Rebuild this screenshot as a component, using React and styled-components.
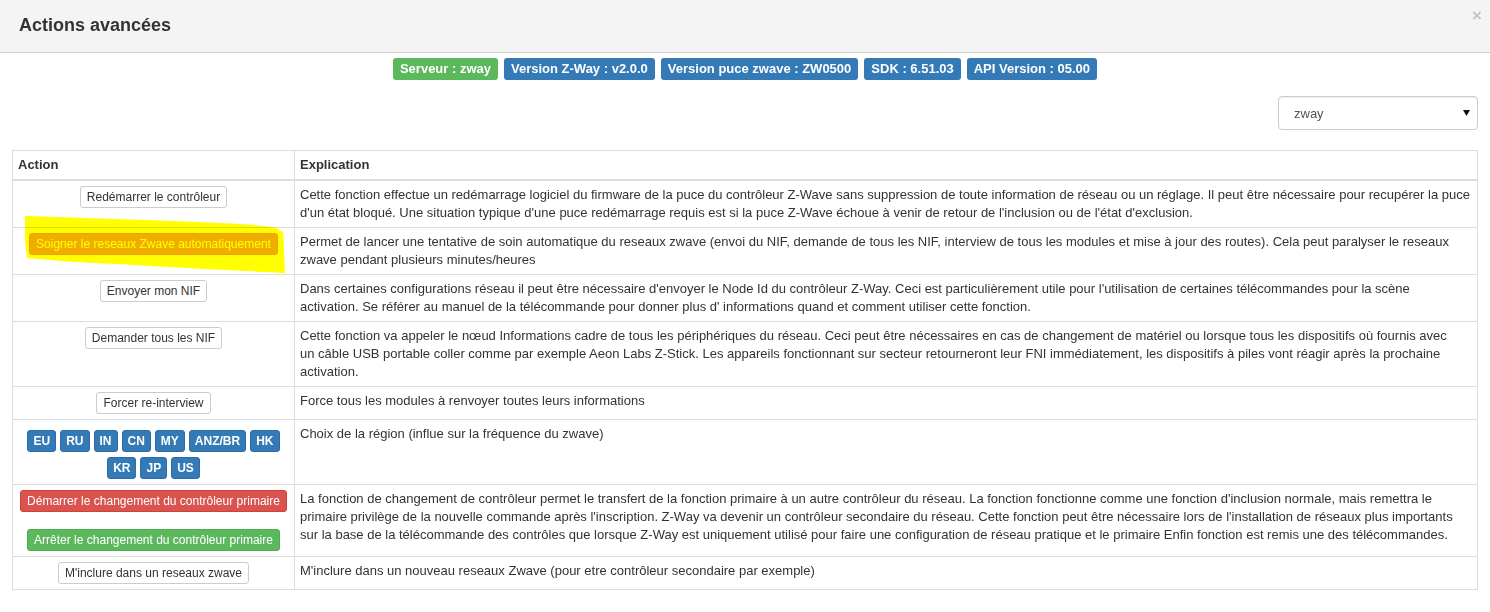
import React from 'react';
import styled, { createGlobalStyle, css } from 'styled-components';

// couleurs bootstrap
const colors = {
    text: '#333',
    border: '#ddd',
    primary: '#337ab7',
    primaryBorder: '#2e6da4',
    success: '#5cb85c',
    successBorder: '#4cae4c',
    danger: '#d9534f',
    dangerBorder: '#d43f3a',
    warning: '#f0ad4e',
    warningBorder: '#eea236',
};

const infos = [
    { label: 'Serveur : zway', tone: 'success' },
    { label: 'Version Z-Way : v2.0.0', tone: 'primary' },
    { label: 'Version puce zwave : ZW0500', tone: 'primary' },
    { label: 'SDK : 6.51.03', tone: 'primary' },
    { label: 'API Version : 05.00', tone: 'primary' },
];

const regions = ['EU', 'RU', 'IN', 'CN', 'MY', 'ANZ/BR', 'HK', 'KR', 'JP', 'US'];

const rows = [
    {
        buttons: [{ text: 'Redémarrer le contrôleur' }],
        text: "Cette fonction effectue un redémarrage logiciel du firmware de la puce du contrôleur Z-Wave sans suppression de toute information de réseau ou un réglage. Il peut être nécessaire pour recupérer la puce d'un état bloqué. Une situation typique d'une puce redémarrage requis est si la puce Z-Wave échoue à venir de retour de l'inclusion ou de l'état d'exclusion.",
    },
    {
        buttons: [{ text: 'Soigner le reseaux Zwave automatiquement', tone: 'warning' }],
        marked: true,
        text: 'Permet de lancer une tentative de soin automatique du reseaux zwave (envoi du NIF, demande de tous les NIF, interview de tous les modules et mise à jour des routes). Cela peut paralyser le reseaux zwave pendant plusieurs minutes/heures',
    },
    {
        buttons: [{ text: 'Envoyer mon NIF' }],
        text: "Dans certaines configurations réseau il peut être nécessaire d'envoyer le Node Id du contrôleur Z-Way. Ceci est particulièrement utile pour l'utilisation de certaines télécommandes pour la scène activation.\u00a0Se référer au manuel de la télécommande pour donner plus d' informations quand et comment utiliser cette fonction.",
    },
    {
        buttons: [{ text: 'Demander tous les NIF' }],
        text: 'Cette fonction va appeler le nœud Informations cadre de tous les périphériques du réseau. Ceci peut être nécessaires en cas de changement de matériel ou lorsque tous les dispositifs où fournis avec un\u00a0câble USB portable coller comme par exemple Aeon Labs Z-Stick. Les appareils fonctionnant sur secteur retourneront leur FNI immédiatement, les dispositifs à piles vont réagir après la prochaine activation.',
    },
    {
        buttons: [{ text: 'Forcer re-interview' }],
        text: 'Force tous les modules à renvoyer toutes leurs informations',
    },
    {
        regions: true,
        text: 'Choix de la région (influe sur la fréquence du zwave)',
    },
    {
        buttons: [
            { text: 'Démarrer le changement du contrôleur primaire', tone: 'danger' },
            { text: 'Arrêter le changement du contrôleur primaire', tone: 'success' },
        ],
        text: "La fonction de changement de contrôleur permet le transfert de la fonction primaire à un autre contrôleur du réseau. La fonction fonctionne comme une fonction d'inclusion normale, mais remettra le primaire privilège de la nouvelle commande après l'inscription. Z-Way va devenir un contrôleur secondaire du réseau. Cette fonction peut être nécessaire lors de l'installation de réseaux plus importants sur la base de la télécommande des contrôles que lorsque Z-Way est uniquement utilisé pour faire une configuration de réseau pratique et le primaire Enfin fonction est remis une des télécommandes.",
    },
    {
        buttons: [{ text: "M'inclure dans un reseaux zwave" }],
        text: "M'inclure dans un nouveau reseaux Zwave (pour etre contrôleur secondaire par exemple)",
    },
];

function App() {
    return (
        <>
            <GlobalStyle />
            <Modal>
                <Header>
                    <Title>Actions avancées</Title>
                    <Close>×</Close>
                </Header>

                <Body>
                    <InfoRow>
                        {infos.map((info) => (
                            <Label key={info.label} $tone={info.tone}>{info.label}</Label>
                        ))}
                    </InfoRow>

                    <SelectRow>
                        <SelectWrap>
                            <Select defaultValue="zway">
                                <option value="zway">zway</option>
                            </Select>
                            <Caret width="7" height="6" viewBox="0 0 7 6">
                                <path d="M0 0h7L3.5 6z" fill="#111" />
                            </Caret>
                        </SelectWrap>
                    </SelectRow>

                    <Table>
                        <thead>
                            <tr>
                                <Th $first>Action</Th>
                                <Th>Explication</Th>
                            </tr>
                        </thead>
                        <tbody>
                            {rows.map((row, i) => (
                                <tr key={i}>
                                    <ActionCell>
                                        {row.regions ? (
                                            <RegionList>
                                                {regions.map((r) => (
                                                    <Btn key={r} $tone="primary" $region>{r}</Btn>
                                                ))}
                                            </RegionList>
                                        ) : (
                                            <BtnStack>
                                                {row.buttons.map((b) => (
                                                    <Btn key={b.text} $tone={b.tone}>{b.text}</Btn>
                                                ))}
                                            </BtnStack>
                                        )}
                                        {row.marked && (
                                            <Highlight width="262" height="60" viewBox="0 0 262 60">
                                                <path
                                                    d="M1 1 C40 2 90 4 150 6 C200 8 235 9 252 13 L259 17 L261 58 C220 56 160 53 110 50 C70 48 30 46 3 43 L1 24 Z"
                                                    fill="#ffff00"
                                                />
                                            </Highlight>
                                        )}
                                    </ActionCell>
                                    <TextCell>{row.text}</TextCell>
                                </tr>
                            ))}
                        </tbody>
                    </Table>
                </Body>
            </Modal>
        </>
    );
}

const GlobalStyle = createGlobalStyle`
    body {
        margin: 0;
        background: #fff;
        font-family: "Liberation Sans", Arial, sans-serif;
        font-size: 13px;
        color: ${colors.text};
    }
`;

const Modal = styled.div`
    width: 1490px;
    background: #fff;
`;

const Header = styled.div`
    height: 53px;
    display: flex;
    justify-content: space-between;
    align-items: flex-start;
    padding: 0 8px 0 19px;
    box-sizing: border-box;
    background: #f4f4f4;
    border-bottom: 1px solid #cfcfcf;
`;

const Title = styled.h4`
    margin: 0;
    padding-top: 15px;
    font-size: 18px;
    line-height: 20px;
    font-weight: bold;
    color: ${colors.text};
`;

const Close = styled.span`
    margin-top: 6px;
    font-size: 17px;
    line-height: 20px;
    font-weight: bold;
    color: #000;
    opacity: 0.2;
`;

const Body = styled.div`
    padding: 5px 12px 20px 12px;
`;

const InfoRow = styled.div`
    display: flex;
    justify-content: center;
    gap: 6px;
`;

const tones = {
    primary: [colors.primary, colors.primaryBorder],
    success: [colors.success, colors.successBorder],
    danger: [colors.danger, colors.dangerBorder],
    warning: [colors.warning, colors.warningBorder],
};

const Label = styled.span`
    display: inline-block;
    padding: 4px 7px 5px;
    font-size: 13px;
    line-height: 13px;
    font-weight: bold;
    color: #fff;
    border-radius: 3px;
    background: ${(props) => tones[props.$tone][0]};
`;

const SelectRow = styled.div`
    display: flex;
    justify-content: flex-end;
    margin-top: 16px;
`;

const SelectWrap = styled.div`
    position: relative;
    width: 200px;
`;

const Select = styled.select`
    appearance: none;
    width: 100%;
    height: 34px;
    padding: 6px 12px 6px 15px;
    font-family: "Liberation Sans", Arial, sans-serif;
    font-size: 13px;
    color: #555;
    background: #fff;
    border: 1px solid #ccc;
    border-radius: 4px;
    box-shadow: inset 0 1px 1px rgba(0, 0, 0, 0.075);
`;

const Caret = styled.svg`
    position: absolute;
    right: 8px;
    top: 14px;
    pointer-events: none;
`;

const Table = styled.table`
    width: 100%;
    margin-top: 20px;
    border-collapse: collapse;
    border: 1px solid ${colors.border};
`;

const Th = styled.th`
    padding: 5px;
    text-align: left;
    font-weight: bold;
    line-height: 18px;
    border: 1px solid ${colors.border};
    border-bottom-width: 2px;
    ${(props) => props.$first && css`width: 271px;`}
`;

const ActionCell = styled.td`
    position: relative;
    padding: 5px;
    vertical-align: top;
    text-align: center;
    line-height: 18px;
    border: 1px solid ${colors.border};
`;

const TextCell = styled.td`
    padding: 5px;
    vertical-align: top;
    line-height: 18px;
    border: 1px solid ${colors.border};
`;

const BtnStack = styled.div`
    display: flex;
    flex-direction: column;
    align-items: center;
    gap: 17px;
`;

const RegionList = styled.div`
    display: flex;
    flex-wrap: wrap;
    justify-content: center;
    gap: 5px 4px;
    padding: 5px 8px 0;
`;

const Btn = styled.button`
    padding: ${(props) => (props.$region ? '1px 5px' : '1px 6px')};
    font-family: "Liberation Sans", Arial, sans-serif;
    font-size: 12px;
    line-height: 18px;
    font-weight: ${(props) => (props.$region ? 'bold' : 'normal')};
    border-radius: 3px;
    border: 1px solid ${(props) => (props.$tone ? tones[props.$tone][1] : '#ccc')};
    background: ${(props) => (props.$tone ? tones[props.$tone][0] : '#fff')};
    color: ${(props) => (props.$tone ? '#fff' : colors.text)};
    white-space: nowrap;
`;

// trait de surligneur jaune
const Highlight = styled.svg`
    position: absolute;
    left: 11px;
    top: -13px;
    mix-blend-mode: multiply;
    pointer-events: none;
`;

export default App;
